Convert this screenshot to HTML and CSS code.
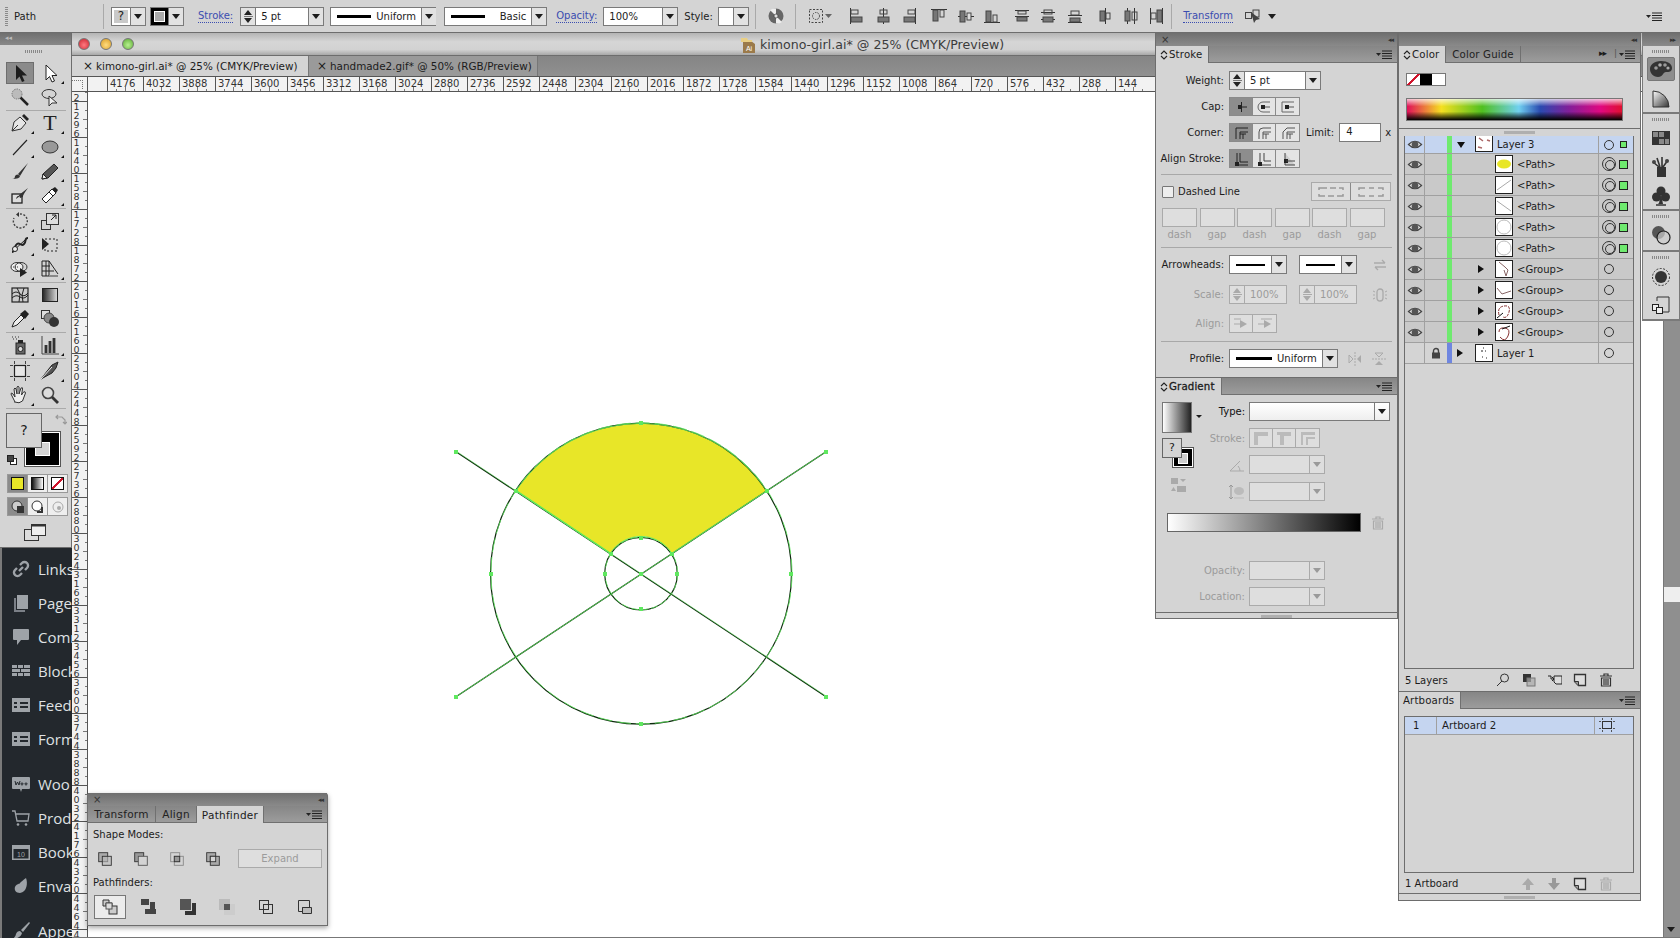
FILE: index.html
```html
<!DOCTYPE html>
<html lang="en">
<head>
<meta charset="UTF-8" />
<title>kimono-girl.ai* @ 25% (CMYK/Preview)</title>
<link rel="stylesheet" href="styles.css">
</head>
<body>

<svg class="sprite" xmlns="http://www.w3.org/2000/svg">
  <symbol id="menu" viewBox="0 0 17 9"><path d="M0 3h5L2.5 6z" fill="#222"/><path d="M6 1h10M6 3.5h10M6 6h10M6 8.5h10" stroke="#222" stroke-width="1"/></symbol>
  <symbol id="updown" viewBox="0 0 8 12"><path d="M1 5l3-3 3 3M1 7l3 3 3-3" fill="none" stroke="#222" stroke-width="1.1"/></symbol>
  <symbol id="eye" viewBox="0 0 14 10"><path d="M1 5q6-6 12 0q-6 6-12 0z" fill="#ddd" stroke="#444"/><circle cx="7" cy="5" r="3" fill="#555"/></symbol>
  <symbol id="trash" viewBox="0 0 14 14"><path d="M1 3h12M5 3V1h4v2M2.5 5h9v8h-9zM5 6v6M7 6v6M9 6v6" fill="none" stroke="currentColor" stroke-width="1.2"/></symbol>
  <symbol id="newpage" viewBox="0 0 14 14"><path d="M1.5 1.5h11v11h-7l-4-4z" fill="#ddd" stroke="currentColor" stroke-width="1.3"/><path d="M1.5 8.5h4v4" fill="#999" stroke="currentColor"/></symbol>
  <symbol id="sq2" viewBox="0 0 20 20"><rect x="3" y="3" width="10" height="10" fill="#aaa" stroke="#333"/><rect x="7" y="7" width="10" height="10" fill="#bbb" fill-opacity=".6" stroke="#333"/></symbol>
</svg>

<div class="app">

  <div class="control-bar">
    <div class="grip-v"></div>
    <span class="cb-name">Path</span>
    <i class="cb-sep sep-path"></i>
    <div class="select w-unknown"><b class="unknown">?</b><u></u></div>
    <div class="select w-stroke-sw"><span class="stroke-sw"></span><u></u></div>
    <a class="cb-link l-stroke">Stroke:</a>
    <div class="select w-weight"><span class="stepper"></span><span class="val">5 pt</span><u></u></div>
    <div class="select w-uniform"><span class="line"></span><span class="val">Uniform</span><u></u></div>
    <div class="select w-basic"><span class="line"></span><span class="val">Basic</span><u></u></div>
    <a class="cb-link l-opacity">Opacity:</a>
    <div class="select w-opacity"><span class="val">100%</span><u></u></div>
    <span class="cb-label">Style:</span>
    <div class="select w-style"><span class="val"></span><u></u></div>
    <i class="cb-sep sep-a"></i>
    <svg class="globe" width="18" height="18" viewBox="0 0 18 18"><circle cx="9" cy="9" r="7.5" fill="#666"/><path d="M9 9L3 3a8 8 0 0 1 6-1.5zM9 9l6 6a8 8 0 0 1-6 1.5z" fill="#eee"/><circle cx="9" cy="9" r="2" fill="#ddd" stroke="#333" stroke-width=".6"/></svg>
    <i class="cb-sep sep-b"></i>
    <svg class="similar" width="24" height="16" viewBox="0 0 24 16"><rect x="1.5" y="1.5" width="13" height="13" fill="none" stroke="#444" stroke-dasharray="2 1.5"/><circle cx="8" cy="8" r="3.5" fill="none" stroke="#444" stroke-dasharray="1.5 1"/><path d="M17 6h7l-3.5 4z" fill="#666"/></svg>
    <div class="align-icons">
      <svg viewBox="0 0 18 18"><path d="M2.5 1v16" stroke="#333"/><rect x="3" y="3" width="7" height="4" fill="none" stroke="#444"/><rect x="3" y="10" width="11" height="5" fill="#777" stroke="#444"/></svg>
      <svg viewBox="0 0 18 18"><path d="M9.5 1v16" stroke="#333"/><rect x="6" y="3" width="7" height="4" fill="none" stroke="#444"/><rect x="4" y="10" width="11" height="5" fill="#777" stroke="#444"/></svg>
      <svg viewBox="0 0 18 18"><path d="M15.5 1v16" stroke="#333"/><rect x="8" y="3" width="7" height="4" fill="none" stroke="#444"/><rect x="4" y="10" width="11" height="5" fill="#777" stroke="#444"/></svg>
      <svg viewBox="0 0 18 18"><path d="M1 2.5h16" stroke="#333"/><rect x="3" y="3" width="5" height="11" fill="#777" stroke="#444"/><rect x="10" y="3" width="4" height="7" fill="none" stroke="#444"/></svg>
      <svg viewBox="0 0 18 18"><path d="M1 9.5h16" stroke="#333"/><rect x="3" y="4" width="5" height="11" fill="#777" stroke="#444"/><rect x="10" y="6" width="4" height="7" fill="#ddd" stroke="#444"/></svg>
      <svg viewBox="0 0 18 18"><path d="M1 15.5h16" stroke="#333"/><rect x="3" y="4" width="5" height="11" fill="#777" stroke="#444"/><rect x="10" y="8" width="4" height="7" fill="none" stroke="#444"/></svg>
      <svg viewBox="0 0 18 18"><path d="M2 3.5h14M2 9.5h14" stroke="#333"/><rect x="5" y="4" width="8" height="3" fill="none" stroke="#444"/><rect x="4" y="10" width="10" height="4" fill="#777" stroke="#444"/></svg>
      <svg viewBox="0 0 18 18"><path d="M2 5.5h14M2 12.5h14" stroke="#333"/><rect x="5" y="3" width="8" height="4" fill="none" stroke="#444"/><rect x="4" y="10" width="10" height="5" fill="#777" stroke="#444"/></svg>
      <svg viewBox="0 0 18 18"><path d="M2 8.5h14M2 15.5h14" stroke="#333"/><rect x="5" y="4" width="8" height="4" fill="none" stroke="#444"/><rect x="4" y="11" width="10" height="4" fill="#777" stroke="#444"/></svg>
      <svg viewBox="0 0 18 18"><path d="M9.5 1v16" stroke="#333"/><rect x="4" y="4" width="5" height="10" fill="#777" stroke="#444"/><rect x="10" y="6" width="4" height="6" fill="none" stroke="#444"/></svg>
      <svg viewBox="0 0 18 18"><path d="M5.5 1v16M12.5 1v16" stroke="#333"/><rect x="3" y="4" width="5" height="10" fill="#777" stroke="#444"/><rect x="10" y="5" width="5" height="8" fill="none" stroke="#444"/></svg>
      <svg viewBox="0 0 18 18"><path d="M2.5 1v16M14.5 1v16" stroke="#333"/><rect x="3" y="6" width="5" height="6" fill="none" stroke="#444"/><rect x="9" y="3" width="5" height="12" fill="#777" stroke="#444"/></svg>
    </div>
    <i class="cb-sep sep-c"></i>
    <a class="cb-link l-transform">Transform</a>
    <svg class="free" width="18" height="16" viewBox="0 0 18 16"><rect x="1.5" y="4.5" width="6" height="6" fill="none" stroke="#444"/><rect x="9" y="2" width="6" height="7" fill="none" stroke="#444"/><path d="M7 4l3 11 2-3 4-1z" fill="#444"/></svg>
    <span class="tri cb-tri"></span>
    <svg class="cb-menu" width="17" height="9"><use href="#menu"/></svg>
  </div>

  <div class="workspace">

    <div class="left-col">
      <div class="toolbar">
        <div class="tb-head">&#9666;&#9666;</div>
        <div class="grip"></div>

        <div class="tool-group">
          <div class="tool on"><svg viewBox="0 0 20 20"><path d="M6 2v15l3.5-3.5L12 19l2.5-1-2.5-5.5h5z" fill="#1c1c1c"/></svg></div>
          <div class="tool more"><svg viewBox="0 0 20 20"><path d="M6 2v15l3.5-3.5L12 19l2.5-1-2.5-5.5h5z" fill="#fff" stroke="#222"/></svg></div>
          <div class="tool"><svg viewBox="0 0 20 20"><path d="M9 9l9 9" stroke="#222" stroke-width="2.5"/><circle cx="7" cy="7" r="5" fill="#bbb" stroke="#777" stroke-dasharray="1.5 1"/></svg></div>
          <div class="tool"><svg viewBox="0 0 20 20"><ellipse cx="9" cy="7" rx="7" ry="4.5" fill="none" stroke="#333"/><path d="M9 9v10l3-3 5 0z" fill="#eee" stroke="#333"/></svg></div>
        </div>
        <div class="tool-group">
          <div class="tool more"><svg viewBox="0 0 20 20"><path d="M2 18l2-9 6-5 6 6-5 6z" fill="#e6e6e6" stroke="#333"/><path d="M12 3l2-2 5 5-2 2z" fill="#222"/><path d="M2 18l6-6" stroke="#333"/></svg></div>
          <div class="tool more"><span class="type-t">T</span></div>
          <div class="tool more"><svg viewBox="0 0 20 20"><path d="M3 18L17 3" stroke="#222" stroke-width="1.1"/></svg></div>
          <div class="tool more"><svg viewBox="0 0 20 20"><ellipse cx="10" cy="10" rx="8" ry="6" fill="#999" stroke="#333"/></svg></div>
          <div class="tool"><svg viewBox="0 0 20 20"><path d="M18 2L8 13l2 2z" fill="#333"/><path d="M2 18q3 0 3-3 2-3 5 0 0 3-8 3z" fill="#333"/></svg></div>
          <div class="tool more"><svg viewBox="0 0 20 20"><path d="M2 18l1-5L14 3l4 4L8 17z" fill="#555" stroke="#222"/><path d="M2 18l1-5 4 4z" fill="#eee" stroke="#222"/></svg></div>
          <div class="tool"><svg viewBox="0 0 20 20"><rect x="2" y="9" width="10" height="9" fill="#ddd" stroke="#222" stroke-width="1.3"/><path d="M18 3L9 10l1 3 3-1q-1-1 5-9zM6 14q1-4 4-3" fill="#333"/></svg></div>
          <div class="tool more"><svg viewBox="0 0 20 20"><path d="M2 14L12 4l4 4L6 18z" fill="#fff" stroke="#222"/><path d="M12 4l3-2 3 3-2 3z" fill="#222"/><path d="M9 7l4 4" stroke="#222"/></svg></div>
        </div>
        <div class="tool-group">
          <div class="tool more"><svg viewBox="0 0 20 20"><path d="M10 3a7 7 0 1 1-6 4" fill="none" stroke="#444" stroke-width="1.4" stroke-dasharray="2 1.5"/><path d="M9 1v5L6 3.5z" fill="#333"/></svg></div>
          <div class="tool more"><svg viewBox="0 0 20 20"><rect x="1.5" y="9.5" width="9" height="9" fill="none" stroke="#333"/><rect x="6.5" y="2.5" width="12" height="11" fill="#ddd" stroke="#333"/><path d="M11 9l5-5M12 4h4v4" fill="none" stroke="#222"/></svg></div>
          <div class="tool more"><svg viewBox="0 0 20 20"><path d="M2 17c3 0 2-6 5-8s4 3 7 0 0-6 4-6" fill="none" stroke="#222" stroke-width="2"/><path d="M2 17L15 5" stroke="#222"/><circle cx="5" cy="14" r="2.5" fill="#eee" stroke="#222"/></svg></div>
          <div class="tool"><svg viewBox="0 0 20 20"><rect x="5" y="4" width="12" height="12" fill="none" stroke="#222" stroke-dasharray="2 2"/><path d="M2 3v12l7-6z" fill="#222"/></svg></div>
          <div class="tool more"><svg viewBox="0 0 20 20"><ellipse cx="7" cy="8" rx="6" ry="4.5" fill="#eee" stroke="#333"/><ellipse cx="11" cy="8" rx="6" ry="4.5" fill="none" stroke="#333"/><path d="M3 8h6" stroke="#333" stroke-dasharray="1 1"/><path d="M10 9v9l7-4.5z" fill="#222"/></svg></div>
          <div class="tool more"><svg viewBox="0 0 20 20"><path d="M2 2h7v15H2zM9 2l9 13M2 7h8M2 12h12M6 2v15" fill="none" stroke="#222"/><path d="M9 17h9" stroke="#888" stroke-width="2"/></svg></div>
        </div>
        <div class="tool-group">
          <div class="tool"><svg viewBox="0 0 20 20"><rect x="2" y="3" width="16" height="14" fill="#ccc" stroke="#222" stroke-width="1.2"/><path d="M2 9q4-4 8 0t8-1M2 13q4-4 8-1t8-2M7 3l3 6-1 8M14 3l-2 7 1 7" fill="none" stroke="#222"/></svg></div>
          <div class="tool"><svg viewBox="0 0 20 20"><defs><linearGradient id="tg"><stop offset="0" stop-color="#222"/><stop offset="1" stop-color="#ddd"/></linearGradient></defs><rect x="2.5" y="3.5" width="15" height="13" fill="url(#tg)" stroke="#222"/></svg></div>
          <div class="tool more"><svg viewBox="0 0 20 20"><path d="M2 18l2-5 7-7 3 3-7 7z" fill="#eee" stroke="#222"/><path d="M10 5l5-4 4 4-4 5z" fill="#222"/></svg></div>
          <div class="tool"><svg viewBox="0 0 20 20"><rect x="1.5" y="1.5" width="8" height="8" fill="#ddd" stroke="#333"/><circle cx="9" cy="9" r="5" fill="#888" stroke="#444"/><circle cx="14" cy="13" r="5" fill="#333"/></svg></div>
        </div>
        <div class="tool-group">
          <div class="tool more"><svg viewBox="0 0 20 20"><rect x="6" y="8" width="9" height="11" fill="#666" stroke="#222"/><rect x="8" y="5" width="5" height="3" fill="#222"/><circle cx="10.5" cy="14" r="2.5" fill="#ddd" stroke="#222"/><path d="M2 2h1M5 2h1M8 2h1M3 4h1M6 4h1" stroke="#333" stroke-dasharray="1 1"/></svg></div>
          <div class="tool more"><svg viewBox="0 0 20 20"><path d="M2 1v18h17" fill="none" stroke="#444"/><path d="M6 10v8M10 6v12M14 3v15" stroke="#333" stroke-width="2.8"/></svg></div>
        </div>
        <div class="tool-group">
          <div class="tool"><svg viewBox="0 0 20 20"><rect x="4.5" y="4.5" width="11" height="11" fill="#e6e6e6" stroke="#222" stroke-width="1.2"/><path d="M4.5 0v3M15.5 0v3M4.5 17v3M15.5 17v3M0 4.5h3M0 15.5h3M17 4.5h3M17 15.5h3" stroke="#444"/></svg></div>
          <div class="tool more"><svg viewBox="0 0 20 20"><path d="M1 18L8 9l4-5 6-3-2 6-4 5z" fill="#555" stroke="#222"/><path d="M1 18L12 6" stroke="#eee"/></svg></div>
          <div class="tool more"><svg viewBox="0 0 20 20"><path d="M5 17L1 9q0-2 2 0l2 3-1-8q1-2 2 0l1 5 0-7q1-1.5 2 0v7l2-6q2-1 1.5 1l-1 6 2-3q2-1 2 1l-3 8q-3 3-8 1z" fill="#eee" stroke="#333"/></svg></div>
          <div class="tool"><svg viewBox="0 0 20 20"><circle cx="8" cy="8" r="5.5" fill="#ddd" stroke="#444" stroke-width="1.6"/><path d="M12 12l6 6" stroke="#333" stroke-width="2.8"/></svg></div>
        </div>

        <div class="fill-stroke">
          <div class="big-stroke"><span></span></div>
          <div class="big-fill">?</div>
          <svg class="swap" width="12" height="12" viewBox="0 0 12 12"><path d="M1 3h6l3 3v4M3 1L1 3l2 2M8 8l2 2 2-2" fill="none" stroke="#999" stroke-width="1.2"/></svg>
          <svg class="defaults" width="10" height="10" viewBox="0 0 10 10"><rect x="3.5" y="3.5" width="6" height="6" fill="#fff" stroke="#222"/><rect x=".5" y=".5" width="6" height="6" fill="#444" stroke="#222"/></svg>
        </div>

        <div class="mode-row colors">
          <span class="on"><i class="yellow"></i></span>
          <span><i class="grad"></i></span>
          <span><i class="none"></i></span>
        </div>
        <div class="mode-row draws">
          <span class="on"><svg width="14" height="14"><circle cx="6" cy="6" r="5" fill="#ccc" stroke="#333"/><rect x="6" y="6" width="7" height="7" fill="#333"/></svg></span>
          <span><svg width="14" height="14"><circle cx="6" cy="6" r="5" fill="#fff" stroke="#333"/><path d="M11 7v5H6" fill="none" stroke="#333" stroke-width="2"/></svg></span>
          <span><svg width="14" height="14"><circle cx="7" cy="7" r="5" fill="#eee" stroke="#aaa"/><circle cx="8" cy="8" r="2" fill="#aaa"/></svg></span>
        </div>
        <svg class="screen-mode" width="22" height="17" viewBox="0 0 22 17"><rect x=".5" y="5.5" width="14" height="11" fill="#ddd" stroke="#333"/><rect x="7.5" y=".5" width="14" height="11" fill="#eee" stroke="#333"/><path d="M7.5 .5h14v2h-14z" fill="#333"/></svg>
      </div>

      <nav class="wp-menu">
        <a><svg viewBox="0 0 20 20"><path d="M8 12l4-4M9 6l2-2a3.5 3.5 0 0 1 5 5l-2 2M11 14l-2 2a3.5 3.5 0 0 1-5-5l2-2" fill="none" stroke="#9ea3a8" stroke-width="2.4"/></svg>Links</a>
        <a><svg viewBox="0 0 20 20"><path d="M6 2h11v14H6z" fill="#9ea3a8"/><path d="M3 5v14h11v-2H5V5z" fill="#7b8087"/></svg>Pages</a>
        <a><svg viewBox="0 0 20 20"><path d="M3 2h14a1 1 0 0 1 1 1v9a1 1 0 0 1-1 1h-7l-4 5v-5H3a1 1 0 0 1-1-1V3a1 1 0 0 1 1-1z" fill="#9ea3a8"/></svg>Comm</a>
        <a><svg viewBox="0 0 20 20"><path d="M1 4h5v3H1zM7 4h5v3H7zM13 4h6v3h-6zM1 8h8v3H1zM10 8h9v3h-9zM1 12h5v3H1zM7 12h5v3H7zM13 12h6v3h-6z" fill="#9ea3a8"/></svg>Block</a>
        <a><svg viewBox="0 0 20 20"><path fill-rule="evenodd" d="M1 3h18v14H1zM3 7v2h3V7zm6 0v2h8V7zm-6 4v2h3v-2zm6 0v2h8v-2z" fill="#9ea3a8"/></svg>Feedl</a>
        <a><svg viewBox="0 0 20 20"><path fill-rule="evenodd" d="M1 3h18v14H1zM3 7v2h3V7zm6 0v2h8V7zm-6 4v2h3v-2zm6 0v2h8v-2z" fill="#9ea3a8"/></svg>Form</a>
        <a class="gap"><svg viewBox="0 0 20 20"><path d="M2 3h16a1 1 0 0 1 1 1v10a1 1 0 0 1-1 1h-7l-1 3-1-3H2a1 1 0 0 1-1-1V4a1 1 0 0 1 1-1z" fill="#9ea3a8"/><path d="M4 7l1 4 1.5-3L8 11l1-4M11 9a1 1 0 1 0 .01 0M15 9a1 1 0 1 0 .01 0" fill="none" stroke="#23282d"/></svg>Woo</a>
        <a><svg viewBox="0 0 20 20"><path d="M1 3h3l2 10h11l1-7H5" fill="none" stroke="#9ea3a8" stroke-width="1.3"/><circle cx="7" cy="16.5" r="1.3" fill="#9ea3a8"/><circle cx="15" cy="16.5" r="1.3" fill="#9ea3a8"/></svg>Produ</a>
        <a><svg viewBox="0 0 20 20"><path fill-rule="evenodd" d="M1 3h18v15H1zM2.5 7v9.5h15V7z" fill="#9ea3a8"/><text class="cal" x="10" y="15" text-anchor="middle">10</text></svg>Book</a>
        <a><svg viewBox="0 0 20 20"><path d="M15 2c2 5 1 14-6 15-4 0-6-3-5-6 2-4 4-2 5-4 1-1 3-3 6-5z" fill="#9ea3a8"/></svg>Envat</a>
        <a class="gap"><svg viewBox="0 0 20 20"><path d="M18 1l1 1-7 9-2-2zM9 10l2 2q-1 5-9 6 3-3 3-5 1-3 4-3z" fill="#9ea3a8"/></svg>Appe</a>
      </nav>
    </div>

    <div class="document">
      <div class="title-bar">
        <div class="lights"><i class="red"></i><i class="amber"></i><i class="green"></i></div>
        <svg width="17" height="17" viewBox="0 0 17 17"><path d="M1 4h4l1 1h5l4 3v9H3V6H1z" fill="#9b7a4a"/><path d="M1 2h6l1 2h4v2H1z" fill="#e9cf85"/><text class="ai" x="9" y="15" text-anchor="middle">Ai</text></svg>
        <span>kimono-girl.ai* @ 25% (CMYK/Preview)</span>
      </div>
      <div class="tabs">
        <div class="tab active"><b>&times;</b>kimono-girl.ai* @ 25% (CMYK/Preview)</div>
        <div class="tab"><b>&times;</b>handmade2.gif* @ 50% (RGB/Preview)</div>
      </div>
      <div class="h-ruler">
        <div class="corner"></div>
        <div class="h-marks" id="hMarks"></div>
      </div>
      <div class="doc-body">
        <div class="v-ruler"><div class="v-marks" id="vMarks"></div></div>
        <div class="canvas">
          <svg class="art" width="380" height="260" viewBox="450 446 380 260">
            <path d="M516 490.7A150.5 150.5 0 0 1 766.7 490.7L671.7 553.3A36.3 36.3 0 0 0 610.3 553.3Z" fill="#e8e628"/>
            <g fill="none" stroke="#0c2a0c" stroke-width="1.2">
              <circle cx="641" cy="573.7" r="150.5"/>
              <circle cx="641" cy="573.7" r="36.3"/>
              <path d="M456 451.7L826 696.7M456 696.7L826 451.7"/>
            </g>
            <g fill="none" stroke="#5fe85f" stroke-width=".8">
              <circle cx="641.5" cy="573.3" r="150.5" stroke-dasharray="14 5"/>
              <circle cx="641.4" cy="573.4" r="36.3" stroke-dasharray="7 3"/>
              <path d="M456 696.7L826 451.7"/>
              <path d="M456.4 451.3L826.4 696.3" stroke-width=".5"/>
              <path d="M516 490.7L610.3 553.3" stroke-width="1.5"/>
              <path d="M516 490.7A150.5 150.5 0 0 1 766.7 490.7L671.7 553.3A36.3 36.3 0 0 0 610.3 553.3Z"/>
            </g>
            <path fill="#5fe85f" d="M454 450h4v4h-4zM824 450h4v4h-4zM454 695h4v4h-4zM824 695h4v4h-4zM639 421h4v4h-4zM639 722h4v4h-4zM489 572h4v4h-4zM789 572h4v4h-4zM639 536h4v4h-4zM639 607h4v4h-4zM603 572h4v4h-4zM675 572h4v4h-4zM639 572h4v4h-4zM514 489h4v4h-4zM765 489h4v4h-4zM609 552h4v4h-4zM670 552h4v4h-4z"/>
          </svg>
        </div>
        <div class="scrollbar"><span class="thumb"></span><span class="tri end"></span></div>
      </div>
    </div>

    <!-- floating panels -->
    <div class="pathfinder panel">
      <div class="p-head"><span>&times;</span><span class="rew">&#9666;&#9666;</span></div>
      <div class="p-tabs">
        <span class="p-tab dim">Transform</span>
        <span class="p-tab dim">Align</span>
        <span class="p-tab active">Pathfinder</span>
        <svg class="p-menu" width="17" height="9"><use href="#menu"/></svg>
      </div>
      <div class="pf-title">Shape Modes:</div>
      <div class="pf-shapes">
        <svg width="18" height="18"><use href="#sq2"/></svg>
        <svg width="18" height="18" viewBox="0 0 20 20"><rect x="3" y="3" width="10" height="10" fill="#999" stroke="#333"/><rect x="7" y="7" width="10" height="10" fill="#d4d4d4" stroke="#555"/></svg>
        <svg width="18" height="18" viewBox="0 0 20 20"><rect x="3" y="3" width="10" height="10" fill="none" stroke="#888"/><rect x="7" y="7" width="10" height="10" fill="none" stroke="#888"/><rect x="7" y="7" width="6" height="6" fill="#999" stroke="#333"/></svg>
        <svg width="18" height="18" viewBox="0 0 20 20"><rect x="3" y="3" width="10" height="10" fill="#aaa" stroke="#333"/><rect x="7" y="7" width="10" height="10" fill="#aaa" stroke="#333"/><rect x="7" y="7" width="6" height="6" fill="#d4d4d4" stroke="#333"/></svg>
        <span class="expand">Expand</span>
      </div>
      <div class="pf-title second">Pathfinders:</div>
      <div class="pf-finders">
        <span class="on"><svg width="20" height="20" viewBox="0 0 20 20"><path d="M3 3h6v3h3v3h-3v-3H6v3H3z" fill="#ccc" stroke="#333"/><rect x="9" y="9" width="8" height="8" fill="#ccc" stroke="#333"/><rect x="6" y="6" width="6" height="6" fill="#ddd" stroke="#555"/></svg></span>
        <span><svg width="20" height="20" viewBox="0 0 20 20"><path d="M2 2h8v6H2zM11 5h5v7h-5zM6 12h11v5H6z" fill="#444"/></svg></span>
        <span><svg width="20" height="20" viewBox="0 0 20 20"><rect x="2" y="2" width="11" height="11" fill="#555"/><path d="M14 6h4v12H7v-4h7z" fill="#333"/></svg></span>
        <span><svg width="20" height="20" viewBox="0 0 20 20"><rect x="2" y="2" width="11" height="11" fill="#bbb"/><rect x="7" y="7" width="11" height="11" fill="#ccc"/><rect x="7" y="7" width="6" height="6" fill="#555"/></svg></span>
        <span><svg width="20" height="20" viewBox="0 0 20 20"><rect x="3.5" y="3.5" width="9" height="9" fill="none" stroke="#333"/><rect x="7.5" y="7.5" width="9" height="9" fill="none" stroke="#333"/></svg></span>
        <span><svg width="20" height="20" viewBox="0 0 20 20"><path d="M3.5 3.5h11v7h-7v4h-4z" fill="none" stroke="#333"/><path d="M7.5 10.5h9v6h-9z" fill="#bbb" stroke="#333"/></svg></span>
      </div>
    </div>

    <div class="dock">

      <div class="dock-col stroke-col panel">
        <div class="p-head"><span>&times;</span><span class="rew">&#9666;&#9666;</span></div>
        <div class="p-tabs">
          <span class="p-tab active"><svg width="8" height="12"><use href="#updown"/></svg>Stroke</span>
          <svg class="p-menu" width="17" height="9"><use href="#menu"/></svg>
        </div>
        <div class="stroke-body">
          <div class="row first"><label>Weight:</label><div class="select w-sweight"><span class="stepper"></span><span class="val">5 pt</span><u></u></div></div>
          <div class="row"><label>Cap:</label>
            <div class="btns">
              <span class="on"><svg width="16" height="14"><path d="M8.5 2v10M8.5 7H14" stroke="#222" fill="none"/><rect x="5" y="5" width="4" height="4" fill="#222"/></svg></span>
              <span><svg width="16" height="14"><path d="M14 2H7a5 5 0 0 0 0 10h7" fill="none" stroke="#666"/><path d="M7 7h7" stroke="#555"/><rect x="5" y="5" width="4" height="4" fill="#222"/></svg></span>
              <span><svg width="16" height="14"><path d="M14 2H2v10h12" fill="none" stroke="#666"/><path d="M7 7h7" stroke="#555"/><rect x="5" y="5" width="4" height="4" fill="#222"/></svg></span>
            </div>
          </div>
          <div class="row"><label>Corner:</label>
            <div class="btns">
              <span class="on"><svg width="16" height="14"><path d="M3 13V2h12M7 13V6h8M7 8h6M10 8v5" fill="none" stroke="#222"/></svg></span>
              <span><svg width="16" height="14"><path d="M3 13V6q0-4 4-4h8M7 13V6h8M7 8h6M10 8v5" fill="none" stroke="#555"/></svg></span>
              <span><svg width="16" height="14"><path d="M3 13V6l4-4h8M7 13V6h8M7 8h6M10 8v5" fill="none" stroke="#555"/></svg></span>
            </div>
            <span class="limit-label">Limit:</span><div class="input limit">4</div><span class="limit-x">x</span>
          </div>
          <div class="row"><label>Align Stroke:</label>
            <div class="btns">
              <span class="on"><svg width="16" height="14"><path d="M4 1v12h11M7 1v9h8" fill="none" stroke="#222"/><rect x="2" y="10" width="4" height="4" fill="#222"/></svg></span>
              <span><svg width="16" height="14"><path d="M4 1v12h11M8 1v8h7" fill="none" stroke="#444"/><rect x="2" y="10" width="4" height="4" fill="#222"/></svg></span>
              <span><svg width="16" height="14"><path d="M5 1v12h10" fill="#ccc" stroke="#444"/><rect x="4" y="7" width="4" height="4" fill="#222"/><path d="M6 9h9" stroke="#444"/></svg></span>
            </div>
          </div>
          <hr class="p-sep">
          <div class="row dashed">
            <span class="check"></span><span class="dash-label">Dashed Line</span>
            <div class="btns off dash-btns">
              <span><svg width="26" height="10"><path d="M1 3V1h8M12 1h6M21 1h4v2M1 7v2h6M10 9h6M19 9h6V7" fill="none" stroke="#999" stroke-width="1.5"/></svg></span>
              <span><svg width="26" height="10"><path d="M1 3V1h6M11 1h5M20 1h5v2M1 7v2h6M11 9h5M20 9h5V7" fill="none" stroke="#999" stroke-width="1.5"/></svg></span>
            </div>
          </div>
          <div class="dash-boxes"><i></i><i></i><i></i><i></i><i></i><i></i></div>
          <div class="dash-names"><span>dash</span><span>gap</span><span>dash</span><span>gap</span><span>dash</span><span>gap</span></div>
          <hr class="p-sep sep2">
          <div class="row first arrow-row"><label>Arrowheads:</label>
            <div class="select w-arrow"><span class="line"></span><u></u></div>
            <div class="select w-arrow second"><span class="line"></span><u></u></div>
            <svg class="side-icon" width="16" height="14" viewBox="0 0 16 14"><path d="M2 5h11M10 2l3 3M14 9H3M6 12L3 9" fill="none" stroke="#aaa" stroke-width="1.3"/></svg>
          </div>
          <div class="row scale-row off"><label>Scale:</label>
            <div class="select w-arrow"><span class="stepper"></span><span class="val">100%</span></div>
            <div class="select w-arrow second"><span class="stepper"></span><span class="val">100%</span></div>
            <svg class="side-icon" width="16" height="16" viewBox="0 0 16 16"><rect x="5" y="2" width="6" height="12" rx="3" fill="none" stroke="#aaa" stroke-width="1.3"/><path d="M1 4l2 1M1 8h2M1 12l2-1M15 4l-2 1M15 8h-2M15 12l-2-1" stroke="#aaa"/></svg>
          </div>
          <div class="row align-row off"><label>Align:</label>
            <div class="btns">
              <span><svg width="16" height="14"><path d="M1 2h7M1 7h6" stroke="#aaa"/><path d="M7 3l7 4-7 4z" fill="#aaa"/></svg></span>
              <span><svg width="16" height="14"><path d="M4 2h11M1 7h6" stroke="#aaa"/><path d="M7 3l7 4-7 4z" fill="#aaa"/></svg></span>
            </div>
          </div>
          <hr class="p-sep sep3">
          <div class="row first profile-row"><label>Profile:</label>
            <div class="select w-profile"><span class="line"></span><span class="val">Uniform</span><u></u></div>
            <svg class="flip f1" width="14" height="14" viewBox="0 0 14 14"><path d="M7 0v14" stroke="#aaa" stroke-dasharray="2 1"/><path d="M1 3l4 4-4 4z" fill="none" stroke="#aaa"/><path d="M13 3L9 7l4 4z" fill="#aaa"/></svg>
            <svg class="flip" width="14" height="14" viewBox="0 0 14 14"><path d="M0 7h14" stroke="#aaa" stroke-dasharray="2 1"/><path d="M3 1h8L7 5z" fill="none" stroke="#aaa"/><path d="M3 13h8L7 9z" fill="#aaa"/></svg>
          </div>
        </div>

        <div class="p-tabs grad-tabs">
          <span class="p-tab active"><svg width="8" height="12"><use href="#updown"/></svg><strong>Gradient</strong></span>
          <svg class="p-menu" width="17" height="9"><use href="#menu"/></svg>
        </div>
        <div class="grad-body">
          <div class="grad-left">
            <div class="grad-thumb"></div><span class="tri small"></span>
            <div class="mini-fs"><span class="mini-stroke"></span><span class="mini-fill">?</span></div>
            <svg class="reorder" width="17" height="16" viewBox="0 0 17 16"><rect x="1" y="1" width="7" height="6" fill="#aaa"/><path d="M10 2h6l-3 3z" fill="#aaa"/><rect x="7" y="9" width="9" height="6" fill="#aaa"/><path d="M1 14h5L3.5 10z" fill="#aaa"/></svg>
          </div>
          <div class="grad-right">
            <div class="row g1"><label class="dark">Type:</label><div class="select w-type"><span class="val"></span><u></u></div></div>
            <div class="row g2 off"><label>Stroke:</label>
              <div class="btns gs">
                <span><svg width="16" height="14"><path d="M1 14V1h14v4H5v9z" fill="#bbb"/></svg></span>
                <span><svg width="16" height="14"><path d="M1 1h14v4H8v9H4V4H1z" fill="#bbb"/></svg></span>
                <span><svg width="16" height="14"><path d="M1 14V1h14v3H3v10z" fill="#bbb"/><path d="M6 14V6h9v2H8v6z" fill="#bbb"/></svg></span>
              </div>
            </div>
            <div class="row g3 off"><svg class="g-icon" width="16" height="14"><path d="M1 13h14M1 13l10-10M9 8q2 2 2 5" fill="none" stroke="#aaa"/></svg><div class="select w-grad"><span class="val"></span><u></u></div></div>
            <div class="row g4 off"><svg class="g-icon" width="16" height="16"><path d="M2 1v14M0 3l2-2 2 2M0 13l2 2 2-2" fill="none" stroke="#999"/><ellipse cx="10" cy="7" rx="5" ry="4" fill="#bbb"/><path d="M5 14h10" stroke="#bbb"/></svg><div class="select w-grad"><span class="val"></span><u></u></div></div>
          </div>
        </div>
        <div class="slider-row">
          <div class="slider"></div>
          <svg class="slider-trash" width="14" height="14"><use href="#trash"/></svg>
        </div>
        <div class="row g5 off"><label>Opacity:</label><div class="select w-grad"><span class="val"></span><u></u></div></div>
        <div class="row g6 off"><label>Location:</label><div class="select w-grad"><span class="val"></span><u></u></div></div>
        <div class="p-foot"></div>
      </div>

      <div class="dock-col color-col panel">
        <div class="p-head"><span></span><span class="rew">&#9666;&#9666;</span></div>
        <div class="p-tabs">
          <span class="p-tab active"><svg width="8" height="12"><use href="#updown"/></svg>Color</span>
          <span class="p-tab dim">Color Guide</span>
          <span class="p-more">&#9656;&#9656;</span>
          <svg class="p-menu" width="17" height="9"><use href="#menu"/></svg>
        </div>
        <div class="color-body">
          <div class="swatches"><i class="none"></i><i class="black"></i><i class="white"></i></div>
          <div class="spectrum"></div>
        </div>
        <div class="p-foot"></div>

        <div class="layers" id="layers"></div>
        <div class="status">
          <span>5 Layers</span>
          <div class="status-icons layers-icons">
            <svg width="14" height="14" viewBox="0 0 14 14"><circle cx="8.5" cy="5" r="4" fill="none" stroke="#333"/><path d="M6 8l-5 5" stroke="#333"/></svg>
            <svg width="14" height="14" viewBox="0 0 14 14"><rect x="1" y="1" width="8" height="8" fill="#333"/><rect x="5" y="5" width="8" height="8" fill="#aaa" fill-opacity=".7" stroke="#777"/></svg>
            <svg width="14" height="14" viewBox="0 0 14 14"><path d="M0 3h3v3h3M4 4l2 2-2 2" fill="none" stroke="#222"/><path d="M6 3h8v8H8L6 9z" fill="#ddd" stroke="#222"/></svg>
            <svg width="14" height="14"><use href="#newpage"/></svg>
            <svg width="14" height="14"><use href="#trash"/></svg>
          </div>
        </div>
        <div class="p-tabs art-tabs">
          <span class="p-tab active">Artboards</span>
          <svg class="p-menu" width="17" height="9"><use href="#menu"/></svg>
        </div>
        <div class="art-list">
          <div class="art-row">
            <span class="art-num">1</span>
            <span class="art-name">Artboard 2</span>
            <span class="art-icon"><svg width="16" height="14" viewBox="0 0 16 14"><rect x="3.5" y="3.5" width="9" height="7" fill="none" stroke="#333"/><path d="M3.5 0v2M12.5 0v2M3.5 12v2M12.5 12v2M0 3.5h2M14 3.5h2M0 10.5h2M14 10.5h2" stroke="#555"/></svg></span>
          </div>
        </div>
        <div class="status art-status">
          <span>1 Artboard</span>
          <div class="status-icons art-icons">
            <svg class="fade" width="14" height="14" viewBox="0 0 14 14"><path d="M7 1l6 7H9v5H5V8H1z" fill="currentColor"/></svg>
            <svg class="fade2" width="14" height="14" viewBox="0 0 14 14"><path d="M7 13l6-7H9V1H5v5H1z" fill="currentColor"/></svg>
            <svg width="14" height="14"><use href="#newpage"/></svg>
            <svg class="fade" width="14" height="14"><use href="#trash"/></svg>
          </div>
        </div>
        <div class="p-foot"></div>
      </div>

      <div class="dock-col icon-col">
        <div class="ic-head"><span class="rew">&#9656;&#9656;</span></div>
        <div class="ic-group g-a">
          <div class="grip"></div>
          <span class="ic on"><svg width="24" height="18" viewBox="0 0 24 18"><path d="M12 1c7 0 11 3 11 7s-3 4-6 4-3 5-8 5-8-4-8-8 4-8 11-8z" fill="#333"/><circle cx="7" cy="8" r="1.8" fill="#999"/><circle cx="11" cy="5" r="1.8" fill="#aaa"/><circle cx="16" cy="5" r="1.8" fill="#999"/><circle cx="19" cy="8" r="1.6" fill="#aaa"/></svg></span>
          <span class="ic"><svg width="20" height="20" viewBox="0 0 20 20"><defs><linearGradient id="dg" x1="0" y1="0" x2="1" y2="1"><stop offset="0" stop-color="#fff"/><stop offset="1" stop-color="#333"/></linearGradient></defs><path d="M2 2v16h16A16 16 0 0 0 2 2z" fill="url(#dg)" stroke="#333"/></svg></span>
        </div>
        <div class="ic-group g-b">
          <div class="grip"></div>
          <span class="ic"><svg width="18" height="14" viewBox="0 0 18 14"><path d="M0 0h18v14H0z" fill="#333"/><path d="M1 1h5v5H1zM7 1h5v5H7zM7 8h5v5H7zM13 8h4v5h-4z" fill="#888"/></svg></span>
          <span class="ic"><svg width="18" height="22" viewBox="0 0 18 22"><rect x="5" y="11" width="9" height="10" fill="#333"/><path d="M8 11L5 2M10 11V1M11 11l5-7M7 11L1 6" stroke="#333" stroke-width="1.6"/><circle cx="15" cy="5" r="2" fill="#444"/><circle cx="2" cy="6" r="2" fill="#444"/></svg></span>
          <span class="ic"><svg width="18" height="20" viewBox="0 0 18 20"><circle cx="9" cy="5" r="4.5" fill="#333"/><circle cx="4.5" cy="11" r="4.5" fill="#333"/><circle cx="13.5" cy="11" r="4.5" fill="#333"/><path d="M9 8l2 10H6l1-1z" fill="#333"/><path d="M4 19h10" stroke="#333" stroke-width="1.5"/></svg></span>
        </div>
        <div class="ic-group g-c">
          <div class="grip"></div>
          <span class="ic"><svg width="20" height="20" viewBox="0 0 20 20"><circle cx="7.5" cy="7.5" r="6.5" fill="#555"/><circle cx="12.5" cy="12.5" r="6.5" fill="#ccc" fill-opacity=".7" stroke="#222" stroke-width="1.2"/></svg></span>
        </div>
        <div class="ic-group g-d">
          <div class="grip"></div>
          <span class="ic"><svg width="20" height="20" viewBox="0 0 20 20"><circle cx="10" cy="10" r="8.5" fill="none" stroke="#333" stroke-dasharray="2 1.5"/><circle cx="10" cy="10" r="6" fill="#333"/></svg></span>
          <span class="ic"><svg width="20" height="20" viewBox="0 0 20 20"><path d="M6 6V2h12v15H9" fill="none" stroke="#333"/><rect x="1.5" y="9.5" width="6" height="6" fill="#eee" stroke="#222"/><rect x="5.5" y="12.5" width="6" height="6" fill="#eee" stroke="#222"/></svg></span>
        </div>
      </div>
    </div>
  </div>
</div>

<script src="script.js"></script>
</body>
</html>
```

FILE: styles.css
```css
* {
  box-sizing: border-box;
}

html, body {
  margin: 0;
  height: 938px;
  overflow: hidden;
}

body {
  font-family: "DejaVu Sans", sans-serif;
  font-size: 10px;
  color: #1c1c1c;
  background: #fff;
}

.sprite {
  position: absolute;
  width: 0;
  height: 0;
}

.app {
  position: relative;
  height: 938px;
  display: flex;
  flex-direction: column;
}

/* control bar */
.control-bar {
  height: 33px;
  flex: none;
  display: flex;
  align-items: center;
  padding-left: 5px;
  background: #d4d4d4;
  border-bottom: 1px solid #6d6d6d;
}

.grip-v {
  width: 3px;
  height: 19px;
  background: repeating-linear-gradient(#8a8a8a 0 1px, transparent 1px 2px);
}

.cb-name { margin-left: 6px; width: 40px; }
.cb-sep { width: 1px; height: 25px; background: #a9a9a9; flex: none; }
.sep-path { margin: 0 7px 0 49px; }
.sep-a { margin-left: 6px; }
.sep-b { margin-left: 10px; }
.sep-c { margin-left: 5px; }

.cb-link {
  color: #3a4db0;
  border-bottom: 1px dotted #3a4db0;
  line-height: 12px;
  flex: none;
}
.l-stroke { margin-left: 14px; }
.l-opacity { margin-left: 9px; }
.l-transform { margin-left: 11px; }
.cb-label { margin-left: 6px; }

.select {
  display: flex;
  align-items: center;
  height: 19px;
  background: #fff;
  border: 1px solid #7a7a7a;
  flex: none;
}
.select .val { flex: 1; padding-left: 5px; white-space: nowrap; }
.select u {
  flex: none;
  width: 15px;
  align-self: stretch;
  background: #e2e2e2;
  border-left: 1px solid #7a7a7a;
  display: flex;
  align-items: center;
  justify-content: center;
}
.select u::after, .tri {
  content: "";
  display: inline-block;
  width: 0;
  height: 0;
  border-left: 4px solid transparent;
  border-right: 4px solid transparent;
  border-top: 5px solid #1c1c1c;
}

.stepper {
  flex: none;
  width: 15px;
  align-self: stretch;
  border-right: 1px solid #7a7a7a;
  background:
    linear-gradient(#7a7a7a, #7a7a7a) center / 9px 1px no-repeat,
    #e2e2e2;
  position: relative;
}
.stepper::before, .stepper::after {
  content: "";
  position: absolute;
  left: 3px;
  border-left: 4px solid transparent;
  border-right: 4px solid transparent;
}
.stepper::before { top: 2px; border-bottom: 5px solid #222; }
.stepper::after { bottom: 2px; border-top: 5px solid #222; }

.line { flex: none; width: 34px; height: 3px; margin-left: 6px; background: #000; }

.w-unknown { width: 35px; }
.w-unknown .unknown { flex: 1; margin: 2px; text-align: center; background: #c9c9c9; font-size: 12px; line-height: 13px; font-weight: 400; }
.w-stroke-sw { width: 34px; margin-left: 4px; }
.stroke-sw { flex: 1; height: 17px; background: #000; padding: 3px; display: flex; }
.stroke-sw::after { content: ""; flex: 1; border: 1px solid #fff; background: #aaa; }
.w-weight { width: 84px; margin-left: 7px; }
.w-uniform { width: 106px; margin-left: 6px; }
.w-basic { width: 103px; margin-left: 8px; }
.w-uniform .val, .w-basic .val { text-align: right; padding-right: 5px; }
.w-opacity { width: 75px; margin-left: 6px; }
.w-style { width: 31px; margin-left: 5px; }

.globe { margin-left: 11px; flex: none; }
.similar { margin-left: 12px; flex: none; }
.align-icons { display: flex; margin-left: 16px; flex: none; }
.align-icons svg { width: 18px; height: 18px; margin-right: 8.3px; flex: none; }
.align-icons svg:nth-child(3n) { margin-right: 12px; }
.align-icons svg:last-child { margin-right: 0; }
.free { margin-left: 11px; flex: none; }
.cb-tri { margin-left: 6px; }
.cb-menu { margin-left: auto; margin-right: 17px; }

/* workspace */
.workspace {
  flex: 1;
  display: flex;
  min-height: 0;
}

.left-col {
  width: 72px;
  flex: none;
  display: flex;
  flex-direction: column;
  background: #7a7a7a;
  overflow: hidden;
}

.toolbar {
  height: 515px;
  flex: none;
  background: #d4d4d4;
  border-right: 1px solid #6d6d6d;
  border-bottom: 1px solid #6d6d6d;
  padding-left: 6px;
  position: relative;
}

.tb-head {
  height: 12px;
  margin-left: -6px;
  padding-left: 5px;
  font-size: 7px;
  line-height: 11px;
  color: #bbb;
  background: linear-gradient(#6f6f6f, #888);
}

.grip {
  height: 3px;
  width: 18px;
  margin: 0 auto;
  background: repeating-linear-gradient(90deg, #888 0 1px, transparent 1px 2px);
}
.toolbar > .grip { margin: 5px 0 8px 19px; }

.tool-group {
  display: grid;
  grid-template-columns: 30px 30px;
  grid-auto-rows: 24px;
  width: 60px;
  border-bottom: 1px solid #aaa;
  padding-bottom: 1px;
}

.tool {
  position: relative;
  width: 28px;
  height: 22px;
  margin-top: 1px;
  display: flex;
  align-items: center;
  justify-content: center;
}
.tool svg { width: 20px; height: 20px; }
.tool.on { background: #8b8b8b; border: 1px solid #6e6e6e; }
.tool.more::after {
  content: "";
  position: absolute;
  right: 0;
  bottom: 0;
  border-left: 3px solid transparent;
  border-bottom: 3px solid #111;
}
.type-t { font-family: "Liberation Serif", serif; font-size: 22px; line-height: 22px; color: #222; }

.fill-stroke { position: relative; height: 55px; }
.big-stroke {
  position: absolute;
  left: 19px;
  top: 23px;
  width: 35px;
  height: 34px;
  background: #000;
  border: 1px solid #fff;
  outline: 1px solid #555;
  padding: 9px;
}
.big-stroke span { display: block; height: 100%; background: #d4d4d4; border: 1px solid #fff; }
.big-fill {
  position: absolute;
  left: 0;
  top: 4px;
  width: 36px;
  height: 35px;
  background: #d4d4d4;
  border: 1px solid #666;
  text-align: center;
  font-size: 14px;
  line-height: 33px;
}
.swap { position: absolute; left: 49px; top: 5px; }
.defaults { position: absolute; left: 1px; top: 46px; }

.mode-row {
  display: flex;
  width: 61px;
  height: 19px;
  margin-top: 10px;
  margin-left: 1px;
  background: #eee;
  border: 1px solid #999;
}
.mode-row span { flex: 1; display: flex; align-items: center; justify-content: center; border-right: 1px solid #999; }
.mode-row span:last-child { border-right: 0; }
.mode-row .on { background: #8b8b8b; }
.mode-row i { width: 13px; height: 13px; display: block; border: 1px solid #111; }
.draws { margin-top: 4px; }
.yellow { background: #e8e628; }
.grad { background: linear-gradient(90deg, #111, #fff); }
.none { background: linear-gradient(135deg, #fff 42%, #d0142c 42% 58%, #fff 58%); }
.screen-mode { display: block; margin: 8px 0 0 18px; }

.wp-menu {
  flex: 1;
  background: #23282d;
  margin-left: 2px;
  padding-top: 4px;
  overflow: hidden;
}
.wp-menu a {
  display: flex;
  align-items: center;
  height: 34px;
  padding-left: 9px;
  font-family: "Open Sans", sans-serif;
  font-size: 15px;
  color: #dfe1e3;
  white-space: nowrap;
}
.wp-menu a.gap { margin-top: 11px; }
.wp-menu svg { width: 20px; height: 20px; margin-right: 7px; flex: none; }
.cal { font-size: 7px; fill: #9ea3a8; font-family: "Liberation Sans", sans-serif; }

/* document window */
.document {
  flex: 1;
  min-width: 0;
  display: flex;
  flex-direction: column;
}

.title-bar {
  height: 23px;
  flex: none;
  position: relative;
  display: flex;
  align-items: center;
  justify-content: center;
  gap: 3px;
  padding-right: 8px;
  font-size: 12.6px;
  color: #3c3c3c;
  background: linear-gradient(#b4b4b4, #d6d6d6 40%, #d2d2d2 75%, #a8a8a8);
  border-bottom: 1px solid #6d6d6d;
}
.ai { font-size: 7px; fill: #fff; font-family: "Liberation Sans", sans-serif; }

.lights { position: absolute; left: 6px; top: 5px; display: flex; gap: 10px; }
.lights i { width: 12px; height: 12px; border-radius: 50%; border: 1px solid #777; }
.red { background: radial-gradient(circle at 50% 60%, #ff7a80, #c8202c); }
.amber { background: radial-gradient(circle at 50% 60%, #ffdc80, #d89a20); }
.green { background: radial-gradient(circle at 50% 60%, #b8f090, #58a830); }

.tabs {
  height: 20px;
  flex: none;
  display: flex;
  background: linear-gradient(#858585, #909090);
}
.tab {
  display: flex;
  align-items: center;
  width: 229px;
  padding-left: 8px;
  font-size: 10.4px;
  background: #9a9a9a;
  border-right: 1px solid #777;
  white-space: nowrap;
}
.tab.active { width: 237px; padding-left: 11px; background: #d4d4d4; }
.tab b { font-weight: 400; font-size: 12px; margin-right: 6px; width: 7px; }

.h-ruler {
  height: 16px;
  flex: none;
  display: flex;
  background: #f2f2f2;
  border-top: 1px solid #555;
  border-bottom: 1px solid #555;
  overflow: hidden;
}
.corner {
  width: 16px;
  flex: none;
  border-right: 1px solid #555;
  background:
    repeating-linear-gradient(90deg, #777 0 1px, transparent 1px 2px) 0 3px / 10px 1px no-repeat,
    repeating-linear-gradient(#777 0 1px, transparent 1px 2px) 10px 3px / 1px 10px no-repeat;
}
.h-marks { display: flex; margin-left: 19px; }
.h-mark {
  flex: none;
  width: 36px;
  padding-left: 2px;
  border-left: 1px solid #555;
  font-size: 10px;
  line-height: 13px;
  color: #333;
  background:
    linear-gradient(#777, #777) 8px 100% / 1px 2px no-repeat,
    linear-gradient(#777, #777) 17px 100% / 1px 4px no-repeat,
    linear-gradient(#777, #777) 26px 100% / 1px 2px no-repeat;
}

.doc-body {
  flex: 1;
  min-height: 0;
  display: flex;
  border-bottom: 1px solid #777;
}

.v-ruler {
  width: 16px;
  flex: none;
  background: #f2f2f2;
  border-right: 1px solid #555;
  overflow: hidden;
}
.v-marks { margin-top: -27px; }
.v-mark {
  height: 36px;
  border-top: 1px solid #555;
  font-size: 9.5px;
  line-height: 9px;
  color: #333;
  background:
    linear-gradient(#777, #777) 100% 8px / 2px 1px no-repeat,
    linear-gradient(#777, #777) 100% 17px / 4px 1px no-repeat,
    linear-gradient(#777, #777) 100% 26px / 2px 1px no-repeat;
}
.v-mark span { display: block; width: 9px; text-align: center; }

.canvas {
  flex: 1;
  position: relative;
  background: #fff;
}
.art { position: absolute; left: 362px; top: 354px; overflow: visible; }

.scrollbar {
  width: 17px;
  flex: none;
  position: relative;
  background: #8f8f8f;
  border-left: 1px solid #777;
}
.thumb { position: absolute; left: 0; right: 0; top: 495px; height: 15px; background: #eee; }
.tri.end { position: absolute; left: 3px; bottom: 5px; }

/* panels */
.panel {
  background: #d4d4d4;
  border: 1px solid #6d6d6d;
  border-top: 0;
}
.pathfinder {
  position: absolute;
  left: 87px;
  top: 793px;
  width: 241px;
  height: 133px;
  border-radius: 3px 3px 0 0;
  box-shadow: 0 2px 5px rgba(0, 0, 0, .35);
}
.dock {
  position: absolute;
  left: 1155px;
  top: 33px;
  display: flex;
  align-items: flex-start;
}
.dock-col { flex: none; }

.p-head {
  height: 13px;
  display: flex;
  justify-content: space-between;
  align-items: center;
  padding: 0 4px 0 5px;
  font-size: 10px;
  color: #333;
  background: linear-gradient(#6f6f6f, #8a8a8a);
}
.rew { font-size: 7px; color: #333; letter-spacing: -1px; }

.p-tabs {
  height: 17px;
  display: flex;
  align-items: stretch;
  position: relative;
  background: linear-gradient(#868686, #9c9c9c);
  border-bottom: 1px solid #707070;
}
.p-tab {
  display: flex;
  align-items: center;
  gap: 1px;
  padding: 0 6px 0 4px;
  border-right: 1px solid #707070;
  font-size: 10.2px;
  letter-spacing: .15px;
}
.p-tab.active { background: #d4d4d4; margin-bottom: -1px; }
.p-tab.dim { color: #222; padding: 0 6px; }
.p-menu { position: absolute; right: 4px; top: 4px; }
.p-more { position: absolute; right: 24px; top: 2px; font-size: 9px; letter-spacing: -1px; }
.p-more::after { content: "|"; margin-left: 8px; color: #555; }

.p-foot {
  height: 8px;
  border-top: 1px solid #6d6d6d;
  background: linear-gradient(90deg, #8a8a8a 0 1px, transparent 1px) center / 2px 3px repeat-x;
  background-clip: content-box;
  padding: 0 105px;
}

/* pathfinder panel */
.pathfinder .p-tab { justify-content: center; padding: 0; font-size: 10.5px; letter-spacing: .25px; }
.pathfinder .p-tab:nth-child(1) { width: 68px; }
.pathfinder .p-tab:nth-child(2) { width: 41px; }
.pathfinder .p-tab:nth-child(3) { width: 67px; }
.pf-title { padding-left: 5px; margin-top: 6px; line-height: 12px; }
.pf-title.second { margin-top: 9px; }
.pf-shapes {
  display: flex;
  align-items: center;
  gap: 18px;
  height: 19px;
  margin-top: 8px;
  padding-left: 8px;
}
.pf-shapes svg { flex: none; }
.expand {
  width: 84px;
  height: 19px;
  margin-left: -2px;
  flex: none;
  text-align: center;
  line-height: 17px;
  color: #9b9b9b;
  background: #dedede;
  border: 1px solid #aaa;
}
.pf-finders {
  display: flex;
  gap: 7px;
  margin-top: 6px;
  padding-left: 6px;
}
.pf-finders span {
  width: 32px;
  height: 24px;
  flex: none;
  display: flex;
  align-items: center;
  justify-content: center;
  border: 1px solid transparent;
}
.pf-finders .on { background: #ececec; border-color: #777; }

/* stroke panel */
.stroke-col { width: 243px; height: 586px; }
.stroke-body { height: 314px; padding-top: 1px; }

.row {
  display: flex;
  align-items: center;
  height: 19px;
  margin-top: 7px;
}
.row label {
  flex: none;
  width: 68px;
  margin-right: 5px;
  text-align: right;
  white-space: nowrap;
}
.off label, .off .val, .off { color: #9b9b9b; }
.off .select { background: #dedede; border-color: #aaa; }
.off .select u { background: #dedede; border-color: #aaa; }
.off .select u::after { border-top-color: #9a9a9a; }
.off .stepper { background: linear-gradient(#aaa, #aaa) center / 9px 1px no-repeat, #dedede; border-color: #aaa; }
.off .stepper::before { border-bottom-color: #aaa; }
.off .stepper::after { border-top-color: #aaa; }

.btns { display: flex; border: 1px solid #8a8a8a; height: 19px; background: #e4e4e4; flex: none; }
.btns span { width: 23px; display: flex; align-items: center; justify-content: center; border-right: 1px solid #8a8a8a; }
.btns span:last-child { border-right: 0; }
.btns .on { background: #8d8d8d; }
.btns.off { border-color: #aaa; background: #dedede; }
.off .btns { border-color: #aaa; background: #dedede; }
.off .btns span { border-color: #aaa; }

.w-sweight { width: 92px; }
.limit-label { margin-left: 6px; }
.input { background: #fff; border: 1px solid #7a7a7a; height: 19px; line-height: 15px; padding-left: 6px; flex: none; }
.limit { width: 42px; margin-left: 5px; }
.limit-x { margin-left: 4px; }

.p-sep { border: 0; border-top: 1px solid #a8a8a8; margin: 6px 5px 0 5px; }

.dashed { margin-top: 7px; }
.check { width: 12px; height: 12px; margin-left: 6px; background: #eee; border: 1px solid #777; border-radius: 1px; flex: none; }
.dash-label { margin-left: 4px; }
.dash-btns { margin-left: auto; margin-right: 6px; }
.dash-btns span { width: 39px; }

.dash-boxes { display: flex; gap: 2.5px; padding-left: 6px; margin-top: 7px; }
.dash-boxes i { width: 35px; height: 19px; background: #dedede; border: 1px solid #aaa; }
.dash-names { display: flex; gap: 2.5px; padding-left: 6px; color: #9b9b9b; margin-top: 2px; line-height: 12px; }
.dash-names span { width: 35px; text-align: center; }
.p-sep.sep2 { margin-top: 6px; }
.w-arrow { width: 58px; }
.w-arrow.second { margin-left: 12px; }
.w-arrow .line { width: 28px; height: 2px; flex: 1; margin: 0 6px; }
.side-icon { margin-left: 15px; }
.scale-row { margin-top: 11px; }
.align-row { margin-top: 10px; }
.p-sep.sep3 { margin-top: 8px; }
.w-profile { width: 109px; }
.w-profile .line { width: 36px; }
.flip { margin-left: 10px; }

/* gradient panel */
.grad-tabs { border-top: 1px solid #6d6d6d; height: 18px; }
.grad-tabs strong { font-weight: 400; -webkit-text-stroke: .3px #1c1c1c; }
.grad-body { display: flex; height: 104px; }
.grad-left { width: 39px; flex: none; position: relative; }
.grad-thumb {
  position: absolute;
  left: 6px;
  top: 7px;
  width: 30px;
  height: 31px;
  border: 1px solid #777;
  background: linear-gradient(90deg, #fff, #222);
}
.tri.small { position: absolute; left: 40px; top: 20px; border-width: 3px 3px 0; }
.mini-fs { position: absolute; left: 6px; top: 43px; width: 31px; height: 29px; }
.mini-stroke { position: absolute; right: 0; bottom: 0; width: 20px; height: 19px; background: #000; border: 1px solid #fff; outline: 1px solid #555; padding: 4px; }
.mini-stroke::after { content: ""; display: block; height: 100%; background: #ccc; border: 1px solid #fff; }
.mini-fill { position: absolute; left: 0; top: 0; width: 20px; height: 20px; background: #d4d4d4; border: 1px solid #666; text-align: center; line-height: 18px; font-size: 11px; }
.reorder { position: absolute; left: 14px; top: 82px; }

.grad-right .row label { width: 50px; margin-right: 4px; }
.grad-right label.dark { color: #111; }
.grad-right .g1 { margin-top: 7px; }
.grad-right .g2 { height: 20px; }
.gs { height: 20px; }
.grad-right .g4 { margin-top: 8px; }
.g-icon { margin-left: 34px; margin-right: 4px; flex: none; }
.w-type { width: 141px; background: linear-gradient(#fff, #eee); }
.w-type u { background: transparent; }
.w-grad { width: 76px; }

.slider-row { display: flex; align-items: center; height: 19px; margin-top: 14px; padding-left: 11px; }
.slider { width: 194px; height: 19px; border: 1px solid #666; background: linear-gradient(90deg, #fff, #000); }
.slider-trash { margin-left: 10px; color: #aaa; }
.stroke-col > .row label { width: 89px; margin-right: 4px; }
.stroke-col > .g5 { margin-top: 29px; }
.stroke-col > .g6 { margin-top: 7px; }
.stroke-col > .p-foot { margin-top: 6px; }

/* color and layers */
.color-col { width: 243px; height: 868px; }
.color-body { height: 65px; padding: 10px 7px 0; }
.swatches { display: flex; height: 13px; width: 40px; border: 1px solid #777; }
.swatches i { flex: 1; }
.swatches .black { background: #000; }
.swatches .white { background: #fff; }
.spectrum {
  height: 23px;
  margin-top: 12px;
  width: 217px;
  border: 1px solid #777;
  background:
    linear-gradient(rgba(255, 255, 255, .75), rgba(255, 255, 255, 0) 35%, rgba(0, 0, 0, 0) 60%, #000),
    linear-gradient(90deg, #e0105a, #f5e020 16%, #50c020 35%, #70d0f0 52%, #2a4ab0 62%, #80209a 75%, #e00880 90%, #e01030);
}

.layers { height: 533px; margin: 0 6px 0 5px; border: 1px solid #6d6d6d; border-top: 0; overflow: hidden; }
.l-row {
  display: flex;
  align-items: center;
  height: 21px;
  background: #c9c9c9;
  border-bottom: 1px solid #a0a0a0;
  position: relative;
}
.l-row.top { height: 18px; background: #c5d5f0; }
.l-row.layer { background: #d4d4d4; }
.l-eye { width: 20px; height: 100%; display: flex; align-items: center; justify-content: center; border-right: 1px solid #a0a0a0; flex: none; }
.l-lock { width: 22px; height: 100%; display: flex; align-items: center; justify-content: center; flex: none; }
.l-strip { width: 5px; height: 100%; background: #6fea6f; flex: none; margin-right: 1px; }
.l-strip.blue { background: #6f86e0; }
.l-tw { flex: none; width: 0; height: 0; position: absolute; border-top: 4px solid transparent; border-bottom: 4px solid transparent; border-left: 6px solid #111; }
.l-tw.open { border: 0; border-left: 4px solid transparent; border-right: 4px solid transparent; border-top: 6px solid #111; }
.l-thumb { position: absolute; width: 18px; height: 18px; background: #fff; border: 1px solid #222; overflow: hidden; }
.l-row.top .l-thumb { top: -2px; }
.l-thumb svg { display: block; width: 16px; height: 16px; }
.l-name { position: absolute; white-space: nowrap; }
.l-target { position: absolute; left: 193px; width: 21px; height: 100%; border-left: 1px solid #a0a0a0; display: flex; align-items: center; justify-content: center; }
.ring { width: 10px; height: 10px; border: 1px solid #333; border-radius: 50%; }
.ring.dbl { width: 14px; height: 14px; padding: 2px; }
.ring.dbl::after { content: ""; display: block; width: 100%; height: 100%; border: 1px solid #333; border-radius: 50%; }
.l-sq { position: absolute; left: 215px; width: 7px; height: 7px; background: #6fea6f; border: 1px solid #222; }
.l-sq.big { left: 214px; width: 9px; height: 9px; }

.status {
  height: 22px;
  display: flex;
  align-items: center;
  padding-left: 6px;
  position: relative;
}
.status-icons { position: absolute; top: 4px; display: flex; }
.status-icons svg { flex: none; color: #333; }
.layers-icons { left: 97px; gap: 11.8px; }
.art-icons { left: 122px; gap: 12px; }
.fade { color: #aaa !important; }
.fade2 { color: #999 !important; }

.art-tabs { border-top: 1px solid #6d6d6d; height: 18px; }
.art-list { height: 157px; margin: 7px 6px 0 5px; border: 1px solid #6d6d6d; }
.art-row { display: flex; height: 18px; background: #c5d5f0; border-bottom: 1px solid #a0a0a0; line-height: 17px; }
.art-num { width: 32px; padding-left: 8px; border-right: 1px solid #a0a0a0; }
.art-name { flex: 1; padding-left: 5px; font-size: 10.2px; }
.art-icon { width: 39px; border-left: 1px solid #a0a0a0; padding: 1px 0 0 4px; }
.art-status { height: 20px; }

/* icon dock */
.icon-col { width: 39px; margin-left: 1px; }
.ic-head { height: 13px; text-align: right; padding-right: 6px; line-height: 11px; background: linear-gradient(#6f6f6f, #8a8a8a); }
.ic-group {
  width: 38px;
  background: #d4d4d4;
  border: 1px solid #7a7a7a;
  border-top: 0;
  border-bottom: 2px solid #7a7a7a;
  padding-top: 4px;
}
.ic-group .grip { margin-bottom: 4px; }
.ic { display: flex; align-items: center; justify-content: center; height: 24px; margin: 0 4px; }
.ic.on { background: #8d8d8d; border: 1px solid #777; border-radius: 2px; margin-bottom: 6px; }
.g-b .ic { height: 25px; margin-bottom: 4px; }
.g-c .ic { height: 26px; }
.g-d .ic { height: 28px; }
.g-a { height: 68px; }
.g-b { height: 97px; }
.g-c { height: 41px; }
.g-d { height: 69px; }
```

FILE: script.js
```js
// rulers
const hMarks = document.getElementById("hMarks");
for (let v = 4176; v >= 144; v -= 144) {
  const mark = document.createElement("div");
  mark.className = "h-mark";
  mark.textContent = v;
  hMarks.appendChild(mark);
}

const vMarks = document.getElementById("vMarks");
for (let v = 1152; v <= 4608; v += 144) {
  const mark = document.createElement("div");
  mark.className = "v-mark";
  mark.innerHTML = String(v).split("").map(d => `<span>${d}</span>`).join("");
  vMarks.appendChild(mark);
}

// layers list
const thumbs = {
  layer3: '<path d="M3 3l4 3M11 5l3 1M2 12l4 1" stroke="#a66" stroke-width="1.5"/>',
  fill: '<ellipse cx="8" cy="8" rx="7" ry="4.5" fill="#e8e628"/>',
  up: '<path d="M1 13L15 3" stroke="#aaa"/>',
  down: '<path d="M1 3l14 10" stroke="#aaa"/>',
  round: '<circle cx="8" cy="8" r="7" fill="none" stroke="#bbb"/>',
  g1: '<path d="M3 1l6 5 3 3-2 6 -2-6" fill="none" stroke="#866"/>',
  g2: '<path d="M1 6l5 6 9-3" fill="none" stroke="#866"/>',
  g3: '<path d="M3 12q-2-8 5-9t5 6-6 5" fill="none" stroke="#833" stroke-dasharray="3 1"/><path d="M1 15l6-5" stroke="#111"/>',
  g4: '<path d="M3 8q0-5 6-4t3 8-8 1" fill="none" stroke="#833"/><path d="M6 5l8-3" stroke="#111"/>',
  layer1: '<path d="M7 3h1M5 6h2M9 6h1M6 12h1M10 13h1" stroke="#222"/>'
};

const rows = [
  { name: "Layer 3", kind: "top", thumb: "layer3" },
  { name: "<Path>", thumb: "fill", dbl: true },
  { name: "<Path>", thumb: "up", dbl: true },
  { name: "<Path>", thumb: "down", dbl: true },
  { name: "<Path>", thumb: "round", dbl: true },
  { name: "<Path>", thumb: "round", dbl: true },
  { name: "<Group>", thumb: "g1", arrow: true },
  { name: "<Group>", thumb: "g2", arrow: true },
  { name: "<Group>", thumb: "g3", arrow: true },
  { name: "<Group>", thumb: "g4", arrow: true },
  { name: "Layer 1", kind: "layer", thumb: "layer1" }
];

function layerRow(r) {
  const isLayer = r.kind === "top" || r.kind === "layer";
  const thumbLeft = isLayer ? 70 : 90;
  const arrowLeft = isLayer ? 52 : 73;
  const eye = r.kind === "layer" ? "" : '<svg width="16" height="11"><use href="#eye"/></svg>';
  const lock = r.kind === "layer"
    ? '<svg width="10" height="12" viewBox="0 0 10 12"><path d="M2.5 6V4a2.5 2.5 0 0 1 5 0v2" fill="none" stroke="#444" stroke-width="1.4"/><rect x="1" y="5.5" width="8" height="6" fill="#444"/></svg>'
    : "";
  const strip = r.kind === "layer" ? "l-strip blue" : "l-strip";

  let twisty = "";
  if (r.kind === "top") twisty = `<span class="l-tw open" style="left:${arrowLeft}px"></span>`;
  else if (r.kind === "layer" || r.arrow) twisty = `<span class="l-tw" style="left:${arrowLeft}px"></span>`;

  let sq = "";
  if (r.dbl) sq = '<span class="l-sq big"></span>';
  if (r.kind === "top") sq = '<span class="l-sq"></span>';

  const div = document.createElement("div");
  div.className = "l-row " + (r.kind || "");
  div.innerHTML = `
    <span class="l-eye">${eye}</span>
    <span class="l-lock">${lock}</span>
    <span class="${strip}"></span>
    ${twisty}
    <span class="l-thumb" style="left:${thumbLeft}px"><svg viewBox="0 0 16 16">${thumbs[r.thumb]}</svg></span>
    <span class="l-name" style="left:${thumbLeft + 22}px"></span>
    <span class="l-target"><span class="ring${r.dbl ? " dbl" : ""}"></span></span>
    ${sq}
  `;
  div.querySelector(".l-name").textContent = r.name;
  return div;
}

const layers = document.getElementById("layers");
rows.forEach(r => layers.appendChild(layerRow(r)));
```
